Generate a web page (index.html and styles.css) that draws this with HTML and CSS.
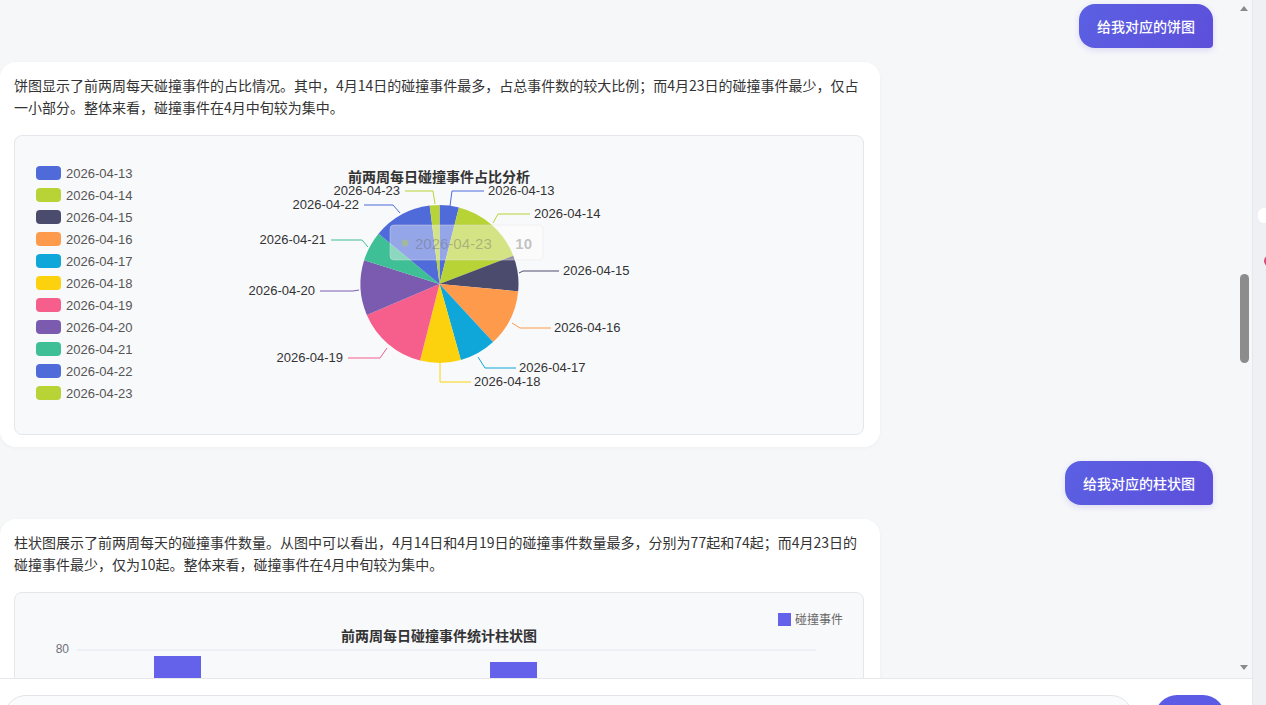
FILE: index.html
```html
<!DOCTYPE html>
<html lang="zh-CN">
<head>
    <meta charset="UTF-8">
    <meta name="viewport" content="width=device-width, initial-scale=1.0">
    <title>碰撞事件分析</title>
    <link rel="stylesheet" href="styles.css">
</head>
<body>
    <div class="app">
        <div class="main">
            <div class="messages">
                <div class="msg-list">
                    <div class="bubble">给我对应的饼图</div>
                    <div class="card">
                        <p>饼图显示了前两周每天碰撞事件的占比情况。其中，4月14日的碰撞事件最多，占总事件数的较大比例；而4月23日的碰撞事件最少，仅占一小部分。整体来看，碰撞事件在4月中旬较为集中。</p>
                        <div class="chart-box">
                            <ul class="legend" id="pie-legend"></ul>
                            <svg class="chart" id="pie-chart" viewBox="15 136 848 298"></svg>
                        </div>
                    </div>
                    <div class="bubble">给我对应的柱状图</div>
                    <div class="card">
                        <p>柱状图展示了前两周每天的碰撞事件数量。从图中可以看出，4月14日和4月19日的碰撞事件数量最多，分别为77起和74起；而4月23日的碰撞事件最少，仅为10起。整体来看，碰撞事件在4月中旬较为集中。</p>
                        <div class="chart-box">
                            <svg class="chart" id="bar-chart" viewBox="15 593 848 298"></svg>
                        </div>
                    </div>
                </div>
                <div class="scrollbar">
                    <span class="arrow up"></span>
                    <span class="thumb"></span>
                    <span class="arrow down"></span>
                </div>
            </div>
            <div class="composer">
                <div class="input"></div>
                <button class="send"></button>
            </div>
        </div>
        <div class="side">
            <span class="side-tab"></span>
            <span class="side-dot"></span>
        </div>
    </div>
    <script>
        const NS = 'http://www.w3.org/2000/svg';
        const days = ['2026-04-13', '2026-04-14', '2026-04-15', '2026-04-16', '2026-04-17', '2026-04-18',
                      '2026-04-19', '2026-04-20', '2026-04-21', '2026-04-22', '2026-04-23'];
        const counts = [20, 77, 37, 59, 38, 42, 74, 57, 31, 61, 10];
        const colors = ['#4f6bd9', '#b7d335', '#4b4c6d', '#fd9a4b', '#0fa6d9', '#fcd20f',
                        '#f65e8b', '#7a5bb0', '#3ebf95', '#4f6bd9', '#b7d335'];
        // leader line points and label anchor for each slice
        const labels = [
            [450, 206, 452, 191, 484, 191, 488, 'start'],
            [493, 223, 498, 214, 530, 214, 534, 'start'],
            [519, 273, 523, 271, 559, 271, 563, 'start'],
            [512, 323, 520, 328, 551, 328, 554, 'start'],
            [478, 357, 485, 368, 516, 368, 519, 'start'],
            [440, 362, 440, 382, 471, 382, 474, 'start'],
            [387, 348, 380, 358, 348, 358, 343, 'end'],
            [359, 290, 353, 291, 320, 291, 315, 'end'],
            [368, 247, 362, 240, 331, 240, 326, 'end'],
            [400, 213, 393, 205, 364, 205, 359, 'end'],
            [435, 204, 433, 191, 405, 191, 400, 'end']
        ];

        function el(tag, attrs, text) {
            const node = document.createElementNS(NS, tag);
            for (const k in attrs) node.setAttribute(k, attrs[k]);
            if (text) node.textContent = text;
            return node;
        }

        function drawLegend() {
            const legend = document.getElementById('pie-legend');
            days.forEach((day, i) => {
                const li = document.createElement('li');
                li.innerHTML = `<span class="swatch" style="background:${colors[i]}"></span>${day}`;
                legend.appendChild(li);
            });
        }

        function drawPie() {
            const svg = document.getElementById('pie-chart');
            const cx = 439.5, cy = 284, r = 79;
            const total = counts.reduce((a, b) => a + b, 0);
            let start = 0;
            svg.appendChild(el('text', { x: 439, y: 177, class: 'title', 'text-anchor': 'middle' }, '前两周每日碰撞事件占比分析'));
            counts.forEach((count, i) => {
                const end = start + count / total * Math.PI * 2;
                const x0 = cx + r * Math.sin(start), y0 = cy - r * Math.cos(start);
                const x1 = cx + r * Math.sin(end), y1 = cy - r * Math.cos(end);
                const large = end - start > Math.PI ? 1 : 0;
                svg.appendChild(el('path', {
                    d: `M${cx} ${cy}L${x0} ${y0}A${r} ${r} 0 ${large} 1 ${x1} ${y1}Z`,
                    fill: colors[i]
                }));
                start = end;
            });
            labels.forEach((l, i) => {
                svg.appendChild(el('polyline', {
                    points: `${l[0]},${l[1]} ${l[2]},${l[3]} ${l[4]},${l[5]}`,
                    fill: 'none', stroke: colors[i], 'stroke-width': 1
                }));
                svg.appendChild(el('text', { x: l[6], y: l[5] - 1, class: 'label', 'text-anchor': l[7] }, days[i]));
            });
            // fading tooltip left over from hover
            const tip = el('g', { class: 'tip' });
            tip.appendChild(el('rect', { x: 390, y: 225, width: 153, height: 35, rx: 4 }));
            tip.appendChild(el('circle', { cx: 405, cy: 243, r: 3.5, fill: '#b7d335' }));
            tip.appendChild(el('text', { x: 415, y: 243 }, '2026-04-23'));
            tip.appendChild(el('text', { x: 532, y: 243, 'text-anchor': 'end', 'font-weight': 'bold' }, '10'));
            svg.appendChild(tip);
        }

        function drawBars() {
            const svg = document.getElementById('bar-chart');
            const base = 810, unit = 2, band = 67.2, left = 76.7;
            svg.appendChild(el('text', { x: 439, y: 636, class: 'title', 'text-anchor': 'middle' }, '前两周每日碰撞事件统计柱状图'));
            svg.appendChild(el('rect', { x: 778, y: 613, width: 13, height: 13, fill: '#6462ea' }));
            svg.appendChild(el('text', { x: 795, y: 620, class: 'legend-text' }, '碰撞事件'));
            [80, 60, 40, 20, 0].forEach(v => {
                const y = base - v * unit;
                svg.appendChild(el('line', { x1: left, x2: left + band * 11, y1: y, y2: y, stroke: v ? '#e0e6f1' : '#6e7079' }));
                svg.appendChild(el('text', { x: 69, y: y - 1, class: 'axis', 'text-anchor': 'end' }, String(v)));
            });
            counts.forEach((count, i) => {
                svg.appendChild(el('rect', {
                    x: left + i * band + 10.1, y: base - count * unit,
                    width: 47, height: count * unit, fill: '#6462ea'
                }));
            });
        }

        drawLegend();
        drawPie();
        drawBars();
    </script>
</body>
</html>
```

FILE: styles.css
```css
* { box-sizing: border-box; }
body { margin: 0; font-family: "Microsoft YaHei", "Noto Sans CJK SC", sans-serif; color: #333; background: #f6f7f9; }
.app { display: flex; height: 705px; overflow: hidden; }
.main { width: 1252px; flex: none; display: flex; flex-direction: column; }
.messages { flex: 1; position: relative; overflow: hidden; }
.msg-list { display: flex; flex-direction: column; gap: 14px; padding: 4px 39px 0 0; }

.bubble { align-self: flex-end; padding: 11px 18px; font-size: 14px; line-height: 22px; color: #fff; font-weight: 500; background: linear-gradient(120deg, #5b60e3, #5d4fda); border-radius: 16px 16px 4px 16px; box-shadow: 0 2px 6px rgba(91, 80, 220, .18); }

.card { width: 880px; background: #fff; border-radius: 16px; padding: 12px 14px; box-shadow: 0 1px 4px rgba(0, 0, 0, .04); }
.card p { margin: 0 0 17px; font-size: 14px; line-height: 22px; }

.chart-box { display: grid; width: 850px; height: 300px; background: #f8f9fb; border: 1px solid #e3e6eb; border-radius: 8px; overflow: hidden; }
.chart-box > * { grid-area: 1 / 1; }
.legend { list-style: none; margin: 0; padding: 26px 0 0 21px; align-self: start; justify-self: start; z-index: 1; font: 13px "Liberation Sans", sans-serif; color: #555; }
.legend li { display: flex; align-items: center; gap: 5px; height: 22px; }
.swatch { width: 25px; height: 14px; border-radius: 4px; }

.chart { display: block; width: 848px; height: 298px; }
.chart text { font-family: "Liberation Sans", "Noto Sans CJK SC", sans-serif; dominant-baseline: central; }
.chart .title { font-size: 14px; font-weight: bold; fill: #333; }
.chart .label { font-size: 13px; fill: #333; }
.chart .axis { font-size: 12px; fill: #6e7079; }
.chart .legend-text { font-size: 12px; fill: #666; }
.tip rect { fill: #fff; fill-opacity: .4; stroke: #e6e6e6; stroke-opacity: .4; }
.tip text { font-size: 15px; fill: #666; fill-opacity: .4; }
.tip circle { opacity: .4; }

.scrollbar { position: absolute; top: 0; right: 0; bottom: 0; width: 15px; }
.arrow { position: absolute; left: 3px; width: 0; height: 0; border-left: 4.5px solid transparent; border-right: 4.5px solid transparent; }
.arrow.up { top: 6px; border-bottom: 5px solid #8a8a8a; }
.arrow.down { bottom: 8px; border-top: 5px solid #8a8a8a; }
.thumb { position: absolute; top: 274px; left: 3px; width: 9px; height: 89px; border-radius: 5px; background: #8c8c8c; }

.composer { height: 27px; flex: none; display: flex; gap: 22px; padding: 16px 27px 0 4px; background: #fff; border-top: 1px solid #e6e8eb; overflow: hidden; }
.input { flex: 1; height: 44px; border: 1px solid #e1e4e8; border-radius: 22px; background: #fafbfc; }
.send { flex: none; width: 70px; height: 44px; border: 0; border-radius: 22px; background: #5b5be6; }

.side { flex: 1; background: #eff0f3; border-left: 1px solid #e7e8eb; overflow: hidden; padding-top: 208px; }
.side-tab { display: block; margin-left: 5px; width: 20px; height: 15px; background: #fff; border-radius: 6px; }
.side-dot { display: block; margin: 32px 0 0 11px; width: 12px; height: 12px; border-radius: 50%; background: #e2457c; }
```
